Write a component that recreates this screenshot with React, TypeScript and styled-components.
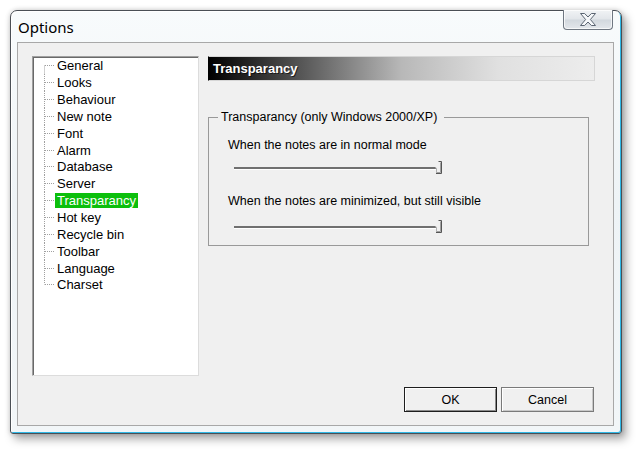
import React from "react";
import styled, { createGlobalStyle } from "styled-components";

const Global = createGlobalStyle`
  html, body { margin: 0; padding: 0; background: #ffffff; }
  body { font-family: "Liberation Sans", Arial, sans-serif; color: #000; }
  * { box-sizing: border-box; }
`;

const Page = styled.div`
  width: 640px;
  height: 452px;
  padding: 10px 0 0 10px;
  overflow: hidden;
`;

const Window = styled.div`
  width: 612px;
  height: 424px;
  display: flex;
  flex-direction: column;
  border: 1px solid #4a4f55;
  border-radius: 7px 7px 3px 3px;
  background: linear-gradient(180deg, #f8fbfc 0%, #eef3f6 45%, #f2f6f8 100%);
  box-shadow: inset -1px -1px 0 #2fb8e6, inset 1px 1px 0 #ffffff,
    4px 5px 10px rgba(0, 0, 0, 0.35), 0 0 5px rgba(0, 0, 0, 0.18);
`;

const TitleBar = styled.div`
  height: 31px;
  display: flex;
  justify-content: space-between;
  align-items: flex-start;
`;

const Title = styled.div`
  padding: 6px 0 0 7px;
  font-family: "Noto Sans", "Liberation Sans", sans-serif;
  font-size: 15px;
  line-height: 20px;
  color: #000;
`;

const CloseButton = styled.div`
  width: 50px;
  height: 20px;
  margin: -1px 8px 0 0;
  display: flex;
  align-items: center;
  justify-content: center;
  border: 1px solid #6f7781;
  border-top: none;
  border-radius: 0 0 4px 4px;
  background: linear-gradient(180deg, #f1f3f5 0%, #e2e6ea 48%, #d2d8de 52%, #e3e7eb 100%);
  box-shadow: inset 0 0 0 1px rgba(255, 255, 255, 0.7);
`;

const Client = styled.div`
  flex: 1;
  margin: 0 7px 7px 6px;
  border: 1px solid #a8a8a8;
  background: #f0f0f0;
  padding: 13px 19px 0 14px;
  display: flex;
  flex-direction: column;
`;

const MainRow = styled.div`
  display: flex;
  gap: 9px;
  height: 320px;
`;

const TreeBox = styled.div`
  width: 167px;
  height: 320px;
  background: #ffffff;
  border-top: 1px solid #a0a0a0;
  border-left: 1px solid #a0a0a0;
  border-right: 1px solid #dcdcdc;
  border-bottom: 1px solid #dcdcdc;
  box-shadow: inset 1px 1px 0 #696969;
  padding: 0.5px 0 0 11px;
`;

const TreeRow = styled.div`
  height: 16.85px;
  display: flex;
  align-items: center;
`;

const TreeLabel = styled.span<{ $selected?: boolean }>`
  height: 15px;
  line-height: 15px;
  padding: 0 2px;
  font-size: 13px;
  white-space: nowrap;
  background: ${(p) => (p.$selected ? "#0cbf0c" : "transparent")};
  color: ${(p) => (p.$selected ? "#ffffff" : "#000000")};
`;

const RightPanel = styled.div`
  flex: 1;
  display: flex;
  flex-direction: column;
`;

const Header = styled.div`
  height: 25px;
  margin-right: -1px;
  padding-left: 4px;
  border: 1px solid #d6d6d6;
  border-left-color: #000;
  background: linear-gradient(90deg, #000000 0%, #5a5a5a 25%, #b8b8b8 50%, #e0e0e0 75%, #ededed 100%);
  color: #ffffff;
  font-weight: bold;
  font-size: 13px;
  line-height: 23px;
  text-shadow: 1px 1px 0 rgba(0, 0, 0, 0.6);
`;

const GroupBox = styled.fieldset`
  margin: 29px 5px 0 0;
  padding: 0 0 10px 0;
  border: 1px solid #999999;
  min-width: 0;
`;

const Legend = styled.legend`
  margin-left: 9px;
  padding: 0 7px 0 3px;
  font-size: 12.5px;
  line-height: 15px;
`;

const GroupContent = styled.div`
  padding: 13px 0 0 19px;
  display: flex;
  flex-direction: column;
  align-items: flex-start;
`;

const Caption = styled.div<{ $gap?: number }>`
  font-size: 12.5px;
  line-height: 15px;
  margin-top: ${(p) => p.$gap ?? 0}px;
`;

const SliderRow = styled.div<{ $gap: number }>`
  height: 17px;
  display: flex;
  align-items: center;
  margin: ${(p) => p.$gap}px 0 0 6px;
`;

const Track = styled.div`
  width: 202px;
  height: 2px;
  background: #707070;
  box-shadow: 0 1px 0 #ffffff;
`;

const ButtonRow = styled.div`
  display: flex;
  justify-content: flex-end;
  gap: 4px;
  margin-top: 11px;
`;

const Button = styled.div<{ $default?: boolean }>`
  width: 93px;
  height: 25px;
  display: flex;
  align-items: center;
  justify-content: center;
  font-size: 12.5px;
  background: #f0f0f0;
  border: 1px solid ${(p) => (p.$default ? "#1e1e1e" : "#7a7a7a")};
  box-shadow: inset 1px 1px 0 #ffffff, inset -1px -1px 0 ${(p) => (p.$default ? "#8a8a8a" : "#c8c8c8")};
`;

const CloseIcon = () => (
  <svg width="18" height="15" viewBox="0 0 18 15">
    <polygon
      points="1.5,1.5 5.6,1.5 9,5 12.4,1.5 16.5,1.5 11.4,7.5 16.5,13.5 12.4,13.5 9,10 5.6,13.5 1.5,13.5 6.6,7.5"
      fill="#f6f8fa"
      stroke="#5b6572"
      strokeWidth="1"
      strokeLinejoin="round"
    />
  </svg>
);

const Connector = ({ first, last }: { first: boolean; last: boolean }) => (
  <svg width="11" height="17" viewBox="0 0 11 17" style={{ flex: "none" }}>
    <line
      x1="0.5"
      x2="0.5"
      y1={first ? 8.5 : 0}
      y2={last ? 8.5 : 17}
      stroke="#a0a0a0"
      strokeWidth="1"
      strokeDasharray="1 1"
    />
    <line x1="1" x2="10" y1="8.5" y2="8.5" stroke="#a0a0a0" strokeWidth="1" strokeDasharray="1 1" />
  </svg>
);

const Thumb = () => (
  <svg width="8" height="15" viewBox="0 0 8 15" style={{ flex: "none", marginLeft: "-1px" }}>
    <path d="M0 7.5 Q1.5 7.5 1.5 9 L1.5 13.5" stroke="#b0b0b0" strokeWidth="1" fill="none" />
    <path d="M3.5 1.5 L6.5 1.5 L6.5 13.5 L1 13.5" stroke="#555555" strokeWidth="1" fill="none" />
    <path d="M5.5 2.5 L5.5 12.5 L2 12.5" stroke="#a0a0a0" strokeWidth="1" fill="none" />
  </svg>
);

const items = [
  "General",
  "Looks",
  "Behaviour",
  "New note",
  "Font",
  "Alarm",
  "Database",
  "Server",
  "Transparancy",
  "Hot key",
  "Recycle bin",
  "Toolbar",
  "Language",
  "Charset",
];

export default function App() {
  return (
    <>
      <Global />
      <Page>
        <Window>
          <TitleBar>
            <Title>Options</Title>
            <CloseButton>
              <CloseIcon />
            </CloseButton>
          </TitleBar>
          <Client>
            <MainRow>
              <TreeBox>
                {items.map((it, i) => (
                  <TreeRow key={it}>
                    <Connector first={i === 0} last={i === items.length - 1} />
                    <TreeLabel $selected={it === "Transparancy"}>{it}</TreeLabel>
                  </TreeRow>
                ))}
              </TreeBox>
              <RightPanel>
                <Header>Transparancy</Header>
                <GroupBox>
                  <Legend>Transparancy (only Windows 2000/XP)</Legend>
                  <GroupContent>
                    <Caption>When the notes are in normal mode</Caption>
                    <SliderRow $gap={6}>
                      <Track />
                      <Thumb />
                    </SliderRow>
                    <Caption $gap={18}>When the notes are minimized, but still visible</Caption>
                    <SliderRow $gap={9}>
                      <Track />
                      <Thumb />
                    </SliderRow>
                  </GroupContent>
                </GroupBox>
              </RightPanel>
            </MainRow>
            <ButtonRow>
              <Button $default>OK</Button>
              <Button>Cancel</Button>
            </ButtonRow>
          </Client>
        </Window>
      </Page>
    </>
  );
}
